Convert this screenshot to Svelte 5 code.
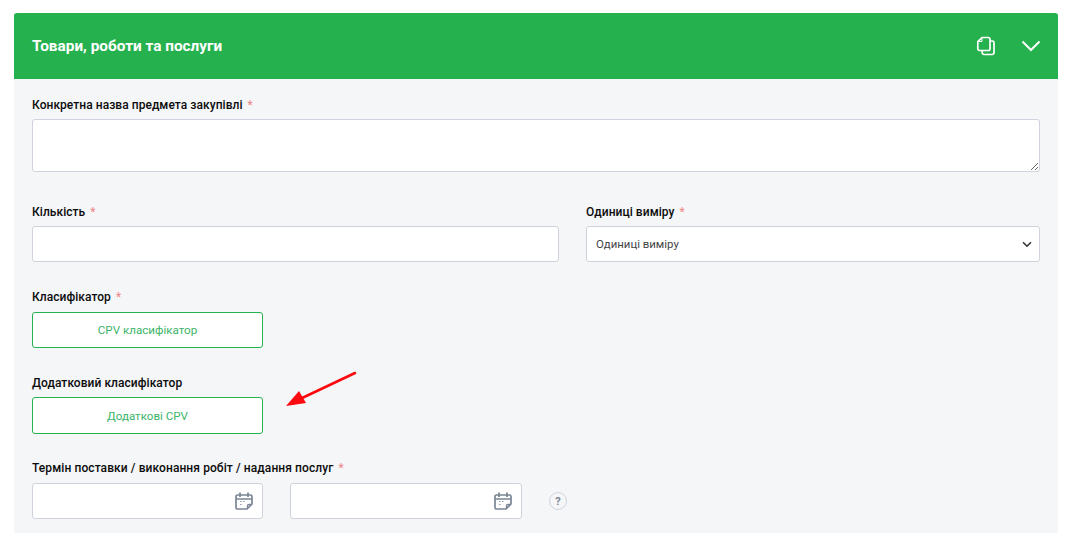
<script>
	const title = 'Товари, роботи та послуги';
</script>

<div class="page">
	<section class="card">
		<header class="card-head">
			<h2>{title}</h2>
			<div class="head-icons">
				<svg width="20" height="20" viewBox="0 0 20 20" fill="none" stroke="#fff" stroke-width="1.700" aria-hidden="true">
					<path d="M6 1.500h6a2 2 0 0 1 2 2v9.300a1.700 1.700 0 0 1-1.700 1.700H3.500a1.700 1.700 0 0 1-1.700-1.700V5.700z" stroke-linejoin="round" />
					<path d="M6 2v3.500H2" stroke-width="1" />
					<path d="M14 5h2.200A1.800 1.800 0 0 1 18 6.800v9.900a1.800 1.800 0 0 1-1.800 1.800H8a1.800 1.800 0 0 1-1.800-1.800v-2.200" />
				</svg>
				<svg width="20" height="12" viewBox="0 0 20 12" fill="none" stroke="#fff" stroke-width="2" aria-hidden="true">
					<path d="M1.500 1.500 10 10l8.500-8.500" />
				</svg>
			</div>
		</header>

		<div class="card-body">
			<div class="field name-field">
				<label for="name">Конкретна назва предмета закупівлі <span class="req">*</span></label>
				<textarea id="name"></textarea>
			</div>

			<div class="row">
				<div class="field">
					<label for="qty">Кількість <span class="req">*</span></label>
					<input id="qty" type="text" />
				</div>
				<div class="field">
					<label for="unit">Одиниці виміру <span class="req">*</span></label>
					<div class="select">
						<span>Одиниці виміру</span>
						<svg width="10" height="7" viewBox="0 0 10 7" fill="none" stroke="#333" stroke-width="1.600" aria-hidden="true">
							<path d="M1 1.200 5 5.200l4-4" />
						</svg>
					</div>
				</div>
			</div>

			<div class="field cpv-field">
				<span class="label">Класифікатор <span class="req">*</span></span>
				<button type="button">CPV класифікатор</button>
			</div>

			<div class="field extra-field">
				<span class="label">Додатковий класифікатор</span>
				<button type="button">Додаткові CPV</button>
			</div>

			<div class="field term-field">
				<span class="label">Термін поставки / виконання робіт / надання послуг <span class="req">*</span></span>
				<div class="dates">
					{#each [0, 1] as i (i)}
						<div class="date-input">
							<svg width="18" height="18" viewBox="0 0 18 18" fill="none" stroke="#7b8594" aria-hidden="true">
								<path d="M12 17H2.500A1.500 1.500 0 0 1 1 15.500v-11A1.500 1.500 0 0 1 2.500 3h13A1.500 1.500 0 0 1 17 4.500V12z" stroke-width="1.700" stroke-linejoin="round" />
								<path d="M1 7h16M5 .500V5M13 .500V5" stroke-width="1.700" />
								<path d="M12.500 16.500V14a1.500 1.500 0 0 1 1.500-1.500h2.500" stroke-width="1.400" />
								<path d="M5 9.500h1.500M8 9.500h1.500M5 12.500h1.500" stroke-width="1.200" stroke-opacity=".8" />
							</svg>
						</div>
					{/each}
					<span class="help">?</span>
				</div>
			</div>
		</div>
	</section>

	<svg class="arrow" width="72" height="38" viewBox="0 0 72 38" aria-hidden="true">
		<path d="M69 2 14 28" stroke="#fb0a0f" stroke-width="2.600" stroke-linecap="round" fill="none" />
		<path d="M0 35 13 20l7 12z" fill="#fb0a0f" />
	</svg>
</div>

<style>
	:global(body) {
		margin: 0;
		background: #fff;
	}

	.page {
		position: relative;
		height: 533px;
		overflow: hidden;
		padding: 13px 18px 0 14px;
		box-sizing: border-box;
		font-family: Roboto, "Liberation Sans", sans-serif;
	}

	.card {
		background: #f5f6f8;
		height: 560px;
	}

	.card-head {
		display: flex;
		align-items: center;
		justify-content: space-between;
		height: 66px;
		padding: 0 17px 0 18px;
		background: #26b14f;
		border-radius: 3px 3px 0 0;
		color: #fff;
	}

	h2 {
		margin: 0;
		font-size: 15.350px;
		font-weight: 700;
	}

	.head-icons {
		display: flex;
		align-items: center;
		gap: 25px;
	}

	.card-body {
		display: flex;
		flex-direction: column;
		gap: 28px;
		padding: 19px 18px 0;
	}

	.field {
		display: flex;
		flex-direction: column;
		gap: 7px;
		min-width: 0;
	}

	.name-field {
		margin-bottom: 5px;
	}

	.cpv-field, .term-field {
		gap: 8px;
	}

	.extra-field button {
		height: 37px;
	}

	.term-field {
		margin-top: -1px;
	}

	label, .label {
		font-size: 12px;
		font-weight: 500;
		line-height: 14px;
		letter-spacing: .05px;
		color: #0c0c0c;
	}

	.term-field .label {
		letter-spacing: .09px;
	}

	.req {
		color: #f08585;
		font-weight: 400;
		margin-left: 2px;
	}

	textarea, input, .select, .date-input {
		box-sizing: border-box;
		display: block;
		width: 100%;
		background: #fff;
		border: 1px solid #d0d3de;
		border-radius: 3px;
		font-family: inherit;
		margin: 0;
	}

	textarea {
		height: 53px;
	}

	input, .select {
		height: 36px;
	}

	.row {
		display: grid;
		grid-template-columns: 527fr 454fr;
		gap: 27px;
	}

	.select {
		display: flex;
		align-items: center;
		justify-content: space-between;
		padding: 0 7px 0 9px;
		font-size: 11.400px;
		color: #444;
	}

	button {
		box-sizing: border-box;
		width: 231px;
		height: 36px;
		background: #fff;
		border: 1px solid #26b14f;
		border-radius: 3px;
		color: #3cb46a;
		font-family: inherit;
		font-size: 11.600px;
		font-weight: 400;
	}

	.dates {
		display: flex;
		align-items: center;
		gap: 27px;
	}

	.date-input {
		display: flex;
		align-items: center;
		justify-content: flex-end;
		width: 231px;
		height: 36px;
		padding-right: 9px;
	}

	.date-input + .date-input {
		width: 232px;
	}

	.help {
		display: flex;
		align-items: center;
		justify-content: center;
		box-sizing: border-box;
		width: 18px;
		height: 18px;
		border: 1px solid #d0d3de;
		border-radius: 50%;
		font-size: 11px;
		font-weight: 700;
		color: #7b8594;
	}

	.arrow {
		position: absolute;
		left: 286px;
		top: 371px;
	}
</style>
